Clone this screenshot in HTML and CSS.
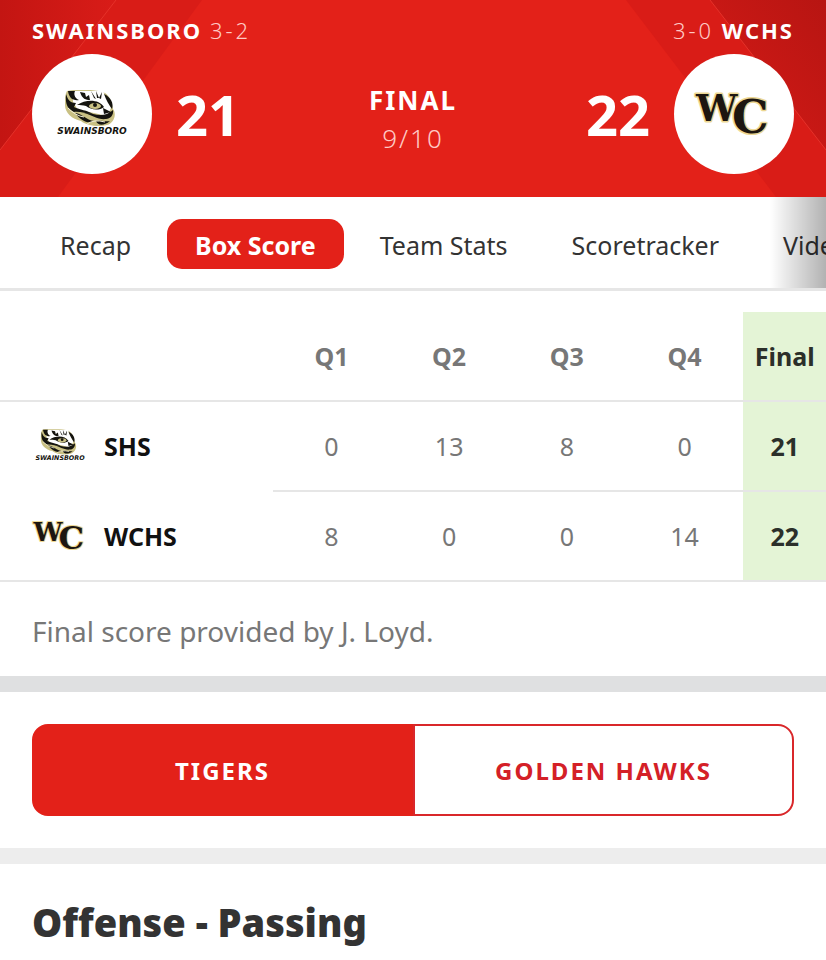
FILE: index.html
```html
<!DOCTYPE html>
<html lang="en">
<head>
    <meta charset="utf-8">
    <meta name="viewport" content="width=device-width, initial-scale=1">
    <title>Swainsboro vs WCHS - Box Score</title>
    <link rel="stylesheet" href="styles.css">
</head>
<body>

<!-- tiger eye, used in both sizes -->
<svg class="sprite" aria-hidden="true">
    <symbol id="tiger" viewBox="0 0 72 48">
        <path fill="#c9c083" d="M11 1C18-1 41-1 49 3C54 6 56 13 57 19C61 24 58 33 51 35C43 37 31 36 25 31C16 29 9 23 9 15C9 9 9 4 11 1Z"/>
        <path fill="#fff" d="M17 1L47 1L55 18L51 26L38 23L22 20L17 12Z"/>
        <path fill="#15140f" d="M10 4C12 10 14 13 20 13L18 17C24 20 31 20 37 24C30 24 23 21 18 22C12 19 9 15 10 4ZM12 1L19 1C17 5 20 9 23 10C17 11 13 8 12 1ZM24 2L29 3L30 7L33 5L34 10C30 10 26 9 24 2ZM35 1L38 8L40 9ZM40 1L41 8L43 8ZM46 2L43 8L45 9ZM48 4C55 7 58 14 56 19C53 15 50 10 48 4Z"/>
        <path fill="#15140f" d="M21 15C30 9 43 9 48 17C43 21 35 20 30 16C27 15 24 15 21 15ZM28 23C37 22 46 30 57 20C58 25 54 29 50 29C42 30 36 25 28 23ZM19 23C27 24 30 30 38 31C33 34 26 32 19 23ZM40 31C45 30 50 32 54 31C48 36 42 36 40 31ZM47 18L55 22L48 24Z"/>
        <ellipse cx="39" cy="16" rx="6" ry="3" fill="#c9c083"/>
        <circle cx="39" cy="15" r="2" fill="#15140f"/>
        <path fill="none" stroke="#f4f0d8" d="M12 18Q20 26 28 27M31 34Q38 29 49 32"/>
    </symbol>
</svg>

<header class="scoreboard">
    <svg class="scoreboard-bg" viewBox="0 0 826 197" preserveAspectRatio="none" aria-hidden="true">
        <defs>
            <linearGradient id="edge-l" x1="0" x2="1">
                <stop offset="0" stop-color="#c31512"/>
                <stop offset="1" stop-color="#d91c18"/>
            </linearGradient>
            <linearGradient id="edge-r" x1="1" y1="0" x2="0" y2="1">
                <stop offset="0" stop-color="#b71512"/>
                <stop offset="1" stop-color="#d81b17"/>
            </linearGradient>
        </defs>
        <path fill="#d91c17" d="M0 0H202L58 197H0Z"/>
        <path fill="url(#edge-l)" d="M0 0H116L0 150Z"/>
        <path fill="none" stroke="#e5322a" d="M116 0L0 150"/>
        <path fill="#d91c17" d="M826 0H626L776 197H826Z"/>
        <path fill="url(#edge-r)" d="M826 0H710L826 150Z"/>
        <path fill="none" stroke="#e5322a" d="M710 0L826 150"/>
    </svg>
    <section class="team">
        <h2 class="team-name">SWAINSBORO <span class="record">3-2</span></h2>
        <div class="team-row">
            <div class="badge">
                <svg class="badge-shs" viewBox="0 0 72 48" role="img" aria-label="Swainsboro">
                    <use href="#tiger" width="72" height="48"/>
                    <text class="logo-name" x="36" y="44" text-anchor="middle">SWAINSBORO</text>
                </svg>
            </div>
            <span class="points">21</span>
        </div>
    </section>
    <div class="status">
        <strong>FINAL</strong>
        <span>9/10</span>
    </div>
    <section class="team team-away">
        <h2 class="team-name"><span class="record">3-0</span> WCHS</h2>
        <div class="team-row">
            <span class="points">22</span>
            <div class="badge">
                <svg class="badge-wchs logo-mono" viewBox="0 0 80 48" role="img" aria-label="WCHS">
                    <text class="mono-w" x="2" y="31">W</text>
                    <text class="mono-c" x="38" y="43">C</text>
                </svg>
            </div>
        </div>
    </section>
</header>

<nav class="tabs">
    <a href="#recap">Recap</a>
    <a href="#box-score" class="cur">Box Score</a>
    <a href="#team-stats">Team Stats</a>
    <a href="#scoretracker">Scoretracker</a>
    <a href="#video">Video</a>
</nav>

<main>
    <table class="linescore">
        <thead>
            <tr>
                <th class="col-team"></th>
                <th>Q1</th>
                <th>Q2</th>
                <th>Q3</th>
                <th>Q4</th>
                <th class="total">Final</th>
            </tr>
        </thead>
        <tbody>
            <tr>
                <th scope="row">
                    <div class="school">
                        <svg viewBox="0 0 72 48" aria-hidden="true">
                            <use href="#tiger" width="72" height="48"/>
                            <text class="logo-name" x="36" y="44" text-anchor="middle">SWAINSBORO</text>
                        </svg>
                        SHS
                    </div>
                </th>
                <td>0</td>
                <td>13</td>
                <td>8</td>
                <td>0</td>
                <td class="total">21</td>
            </tr>
            <tr>
                <th scope="row">
                    <div class="school">
                        <svg class="logo-mono" viewBox="0 0 80 48" aria-hidden="true">
                            <text class="mono-w" x="2" y="31">W</text>
                            <text class="mono-c" x="38" y="43">C</text>
                        </svg>
                        WCHS
                    </div>
                </th>
                <td>8</td>
                <td>0</td>
                <td>0</td>
                <td>14</td>
                <td class="total">22</td>
            </tr>
        </tbody>
    </table>
    <p class="note">Final score provided by J. Loyd.</p>

    <div class="switch">
        <button type="button" class="cur">TIGERS</button>
        <button type="button">GOLDEN HAWKS</button>
    </div>

    <h1 class="heading">Offense - Passing</h1>
</main>

</body>
</html>
```

FILE: styles.css
```css
*{margin:0;padding:0;box-sizing:border-box;}
body{background:#fff;color:#333;font-family:"Noto Sans","Open Sans",sans-serif;font-size:25px;overflow-x:hidden;}
a{text-decoration:none;color:inherit;}
.sprite{position:absolute;width:0;height:0;}

/* logos */
.logo-name{font:italic bold 9px "DejaVu Sans",sans-serif;fill:#15140f;}
.logo-mono{overflow:visible;font-family:"DejaVu Serif",serif;font-weight:bold;fill:#1d1610;stroke:#ecd793;stroke-width:3px;stroke-linejoin:round;paint-order:stroke;}
.mono-w{font-size:37px;}
.mono-c{font-size:46px;}

/* scoreboard */
.scoreboard{position:relative;display:grid;grid-template-columns:1fr auto 1fr;padding:16px 32px 23px;background:#e32119;color:#fff;}
.scoreboard-bg{position:absolute;left:0;top:0;width:100%;height:100%;}
.team,.status{position:relative;}
.team-name{font-size:22px;line-height:28px;font-weight:700;letter-spacing:2px;white-space:nowrap;}
.record{font-weight:300;color:#ffc9c4;letter-spacing:3px;}
.team-row{display:flex;align-items:center;gap:24px;margin-top:10px;}
.team-away .team-name{text-align:right;}
.team-away .team-row{justify-content:flex-end;}
.badge{display:flex;align-items:center;justify-content:center;width:120px;height:120px;border-radius:50%;background:#fff;}
.badge-shs{width:72px;height:48px;}
.badge-wchs{width:80px;height:48px;}
.points{font-size:56px;line-height:64px;font-weight:700;}
.status{display:flex;flex-direction:column;align-items:center;padding-top:65px;line-height:38px;font-size:26px;letter-spacing:2px;}
.status span{font-weight:300;color:#ffc9c4;}

/* tabs */
.tabs{position:relative;display:flex;align-items:center;gap:8px;padding:22px 0 19px 32px;border-bottom:3px solid #e6e6e6;overflow:hidden;white-space:nowrap;}
.tabs a{padding:3px 28px 0;line-height:47px;border-radius:15px;}
.tabs .cur{background:#e32119;color:#fff;font-weight:700;}
.tabs::after{content:"";position:absolute;right:0;top:0;bottom:0;width:56px;background:linear-gradient(to right,rgba(0,0,0,0),rgba(0,0,0,.3));}

/* line score */
.linescore{width:100%;margin-top:21px;border-collapse:separate;border-spacing:0;table-layout:fixed;}
.linescore th,.linescore td{height:90px;border-bottom:2px solid #e6e6e6;text-align:center;color:#777;}
.linescore tbody tr:first-child th{border-bottom-color:transparent;}
.linescore .col-team{width:33%;}
.linescore .total{width:10%;background:#e4f4d6;color:#2b2f2a;font-weight:700;}
.linescore .school{display:flex;align-items:center;padding-left:32px;color:#111;}
.school svg{flex:none;width:56px;height:34px;margin-right:16px;}
.note{padding:30px 32px 26px;border-bottom:16px solid #dfe0e1;font-size:28px;line-height:38px;color:#777;}

/* team switch */
.switch{display:flex;padding:32px;border-bottom:16px solid #ededed;}
.switch button{flex:1;height:92px;border:2px solid #d9272a;border-radius:0 16px 16px 0;background:#fff;color:#d42027;font:inherit;font-size:24px;font-weight:700;letter-spacing:2px;}
.switch .cur{border-radius:16px 0 0 16px;background:#e32119;border-color:#e32119;color:#fff;}

.heading{padding:32px 32px 0;font-size:38px;line-height:52px;font-weight:900;}
```
